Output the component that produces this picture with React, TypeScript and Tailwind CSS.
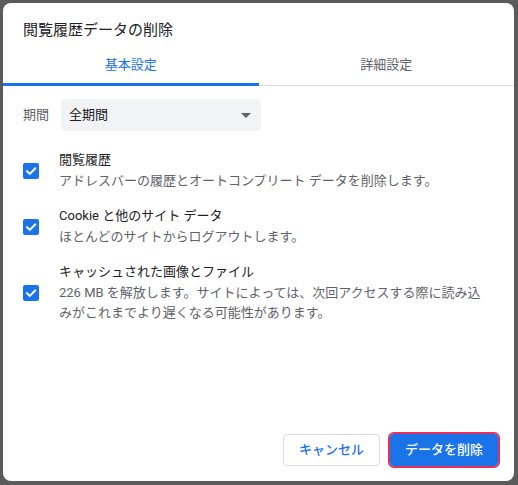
import { useState } from 'react';

const items = [
  {
    title: '閲覧履歴',
    desc: 'アドレスバーの履歴とオートコンプリート データを削除します。',
  },
  {
    title: 'Cookie と他のサイト データ',
    desc: 'ほとんどのサイトからログアウトします。',
  },
  {
    title: 'キャッシュされた画像とファイル',
    desc: '226 MB を解放します。サイトによっては、次回アクセスする際に読み込みがこれまでより遅くなる可能性があります。',
  },
];

function Checkbox({ checked, onChange }: { checked: boolean; onChange: () => void }) {
  return (
    <button
      type="button"
      onClick={onChange}
      className={`w-[16px] h-[16px] shrink-0 rounded-[2px] flex items-center justify-center ${
        checked ? 'bg-[#1a73e8]' : 'border-2 border-[#5f6368] bg-white'
      }`}
    >
      {checked && (
        <svg width="12" height="12" viewBox="0 0 12 12" fill="none">
          <path d="M2 6.2 L4.8 9 L10.2 3.4" stroke="white" strokeWidth="1.9" strokeLinecap="square" />
        </svg>
      )}
    </button>
  );
}

export default function App() {
  const [tab, setTab] = useState(0);
  const [checked, setChecked] = useState([true, true, true]);

  return (
    <div
      className="w-[518px] h-[485px] bg-[#5b5b5b] p-[3px] overflow-hidden"
      style={{ fontFamily: 'Roboto, "Noto Sans CJK JP", sans-serif' }}
    >
      <div className="w-[511px] h-[478px] bg-white rounded-[8px] flex flex-col">
        {/* タイトル */}
        <div className="pt-[17px] px-[20px] text-[15px] leading-[20px] text-[#202124]">
          閲覧履歴データの削除
        </div>

        {/* タブ */}
        <div className="mt-[4px] flex">
          {['基本設定', '詳細設定'].map((t, i) => (
            <div
              key={t}
              onClick={() => setTab(i)}
              className={`flex-1 h-[42px] pt-[13px] flex items-start justify-center text-[13px] leading-[16px] box-border cursor-pointer ${
                tab === i
                  ? 'text-[#1a73e8] border-b-[3px] border-[#1a73e8]'
                  : 'text-[#5f6368] border-b border-[#dadce0]'
              }`}
            >
              {t}
            </div>
          ))}
        </div>

        {/* 期間 */}
        <div className="mt-[13px] px-[20px] flex items-center gap-[12px]">
          <span className="text-[13px] text-[#5f6368]">期間</span>
          <div className="w-[200px] h-[32px] rounded-[4px] bg-[#f1f3f4] flex items-center justify-between pl-[8px] pr-[10px]">
            <span className="text-[13px] text-[#202124]">全期間</span>
            <svg width="10" height="5" viewBox="0 0 10 5">
              <path d="M0 0 L10 0 L5 5 Z" fill="#5f6368" />
            </svg>
          </div>
        </div>

        {/* チェック項目 */}
        <div className="mt-[19px] px-[20px] flex flex-col gap-[15px]">
          {items.map((it, i) => (
            <div key={it.title} className="flex items-center gap-[20px]">
              <Checkbox
                checked={checked[i]}
                onChange={() => setChecked(checked.map((c, j) => (j === i ? !c : c)))}
              />
              <div className="w-[424px]">
                <div className="text-[13px] leading-[20px] text-[#202124]">{it.title}</div>
                <div className="mt-px text-[13px] leading-[20px] text-[#5f6368]">{it.desc}</div>
              </div>
            </div>
          ))}
        </div>

        {/* ボタン */}
        <div className="mt-auto pb-[15px] pr-[16px] flex justify-end gap-[10px]">
          <button
            type="button"
            className="w-[97px] h-[32px] rounded-[4px] border border-[#dadce0] bg-white text-[13px] font-medium text-[#1a73e8]"
          >
            キャンセル
          </button>
          <button
            type="button"
            className="w-[108px] h-[32px] rounded-[4px] bg-[#1a73e8] text-[13px] font-medium text-white outline-2 outline-solid outline-[#e8305a] outline-offset-0"
          >
            データを削除
          </button>
        </div>
      </div>
    </div>
  );
}
